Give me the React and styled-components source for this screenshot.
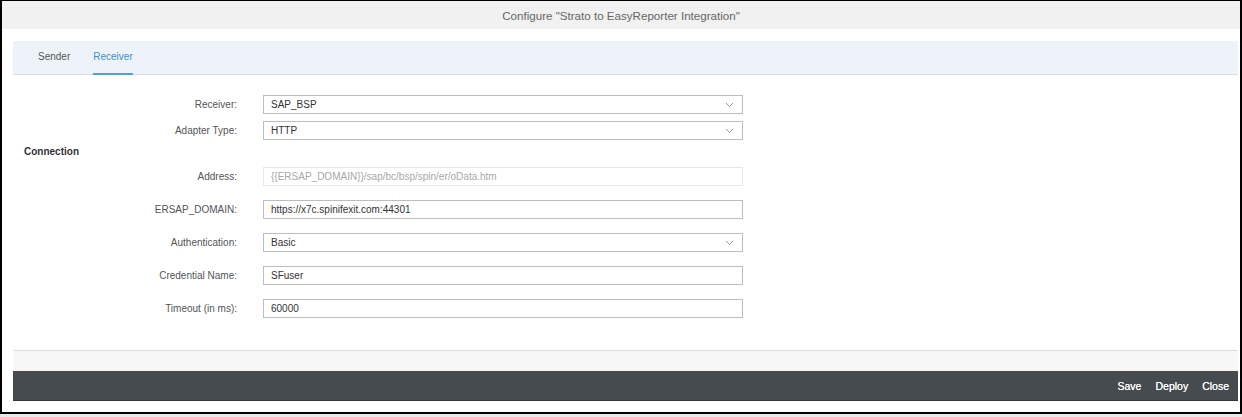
import React from 'react';
import styled, { createGlobalStyle } from 'styled-components';

const GlobalStyle = createGlobalStyle`
  html, body {
    margin: 0;
    padding: 0;
    background: #e9e9e9;
  }
  * {
    box-sizing: border-box;
  }
`;

const Frame = styled.div`
  width: 1242px;
  height: 414px;
  background: #ffffff;
  border-top: 1px solid #000;
  border-left: 2px solid #000;
  border-right: 2px solid #000;
  border-bottom: 2px solid #000;
  display: flex;
  flex-direction: column;
  font-family: 'Liberation Sans', Arial, sans-serif;
`;

const Header = styled.div`
  height: 28px;
  background: #f1f1f2;
  display: flex;
  align-items: center;
  justify-content: center;
  font-size: 11.6px;
  color: #666;
`;

const Body = styled.div`
  flex: 1;
  display: flex;
  flex-direction: column;
  padding: 12px 2px 0 11px;
`;

const TabBar = styled.div`
  height: 34px;
  background: #eef3f9;
  border-bottom: 1px solid #d9dee4;
  display: flex;
  padding-left: 25px;
  gap: 23px;
`;

const Tab = styled.div`
  display: flex;
  align-items: center;
  font-size: 10px;
  color: ${(p) => (p.active ? '#3c8fcf' : '#555')};
  border-bottom: 2px solid ${(p) => (p.active ? '#4aa3df' : 'transparent')};
  margin-bottom: -1px;
  padding: 0 0 1px;
`;

const Form = styled.div`
  flex: 1;
  display: flex;
  flex-direction: column;
  padding-top: 19px;
`;

const Group = styled.div`
  display: flex;
  flex-direction: column;
  gap: ${(p) => p.gap}px;
`;

const Row = styled.div`
  display: grid;
  grid-template-columns: 224px 480px;
  column-gap: 26px;
  align-items: center;
  height: 20px;
`;

const Label = styled.div`
  text-align: right;
  font-size: 10px;
  color: #555;
`;

const Field = styled.div`
  position: relative;
  height: 19px;
  border: 1px solid ${(p) => (p.disabled ? '#e6e6e6' : '#bdbdbd')};
  background: #fff;
  display: flex;
  align-items: center;
  padding: 0 7px;
  font-size: 10px;
  color: ${(p) => (p.disabled ? '#a8a8a8' : '#333')};
`;

const Chevron = styled.svg`
  position: absolute;
  right: 8px;
  top: 6px;
`;

const Section = styled.div`
  font-size: 10px;
  font-weight: bold;
  color: #333;
  padding-left: 11px;
  line-height: 14px;
  margin: 5px 0 7px;
`;

const FooterStrip = styled.div`
  height: 21px;
  background: #f7f7f7;
  border-top: 1px solid #dcdcdc;
`;

const ActionBar = styled.div`
  height: 30px;
  background: #464b4f;
  border-bottom: 1px solid #33373a;
  display: flex;
  justify-content: flex-end;
  align-items: center;
  padding-right: 9px;
  gap: 14px;
`;

const Action = styled.div`
  color: #fff;
  font-size: 10.5px;
  text-shadow: 0 0 0.4px #fff;
`;

const BottomGap = styled.div`
  height: 11px;
`;

const Select = ({ value }) => (
  <Field>
    {value}
    <Chevron width="9" height="6" viewBox="0 0 9 6">
      <path d="M1 1 L4.5 4.5 L8 1" fill="none" stroke="#999" strokeWidth="1" />
    </Chevron>
  </Field>
);

const FieldRow = ({ label, value, select, disabled }) => (
  <Row>
    <Label>{label}</Label>
    {select ? <Select value={value} /> : <Field disabled={disabled}>{value}</Field>}
  </Row>
);

export default function App() {
  return (
    <>
      <GlobalStyle />
      <Frame>
        <Header>Configure "Strato to EasyReporter Integration"</Header>
        <Body>
          <TabBar>
            <Tab>Sender</Tab>
            <Tab active>Receiver</Tab>
          </TabBar>
          <Form>
            <Group gap={6}>
              <FieldRow label="Receiver:" value="SAP_BSP" select />
              <FieldRow label="Adapter Type:" value="HTTP" select />
            </Group>
            <Section>Connection</Section>
            <Group gap={13}>
              <FieldRow label="Address:" value="{{ERSAP_DOMAIN}}/sap/bc/bsp/spin/er/oData.htm" disabled />
              <FieldRow label="ERSAP_DOMAIN:" value="https://x7c.spinifexit.com:44301" />
              <FieldRow label="Authentication:" value="Basic" select />
              <FieldRow label="Credential Name:" value="SFuser" />
              <FieldRow label="Timeout (in ms):" value="60000" />
            </Group>
          </Form>
          <FooterStrip />
          <ActionBar>
            <Action>Save</Action>
            <Action>Deploy</Action>
            <Action>Close</Action>
          </ActionBar>
          <BottomGap />
        </Body>
      </Frame>
    </>
  );
}
